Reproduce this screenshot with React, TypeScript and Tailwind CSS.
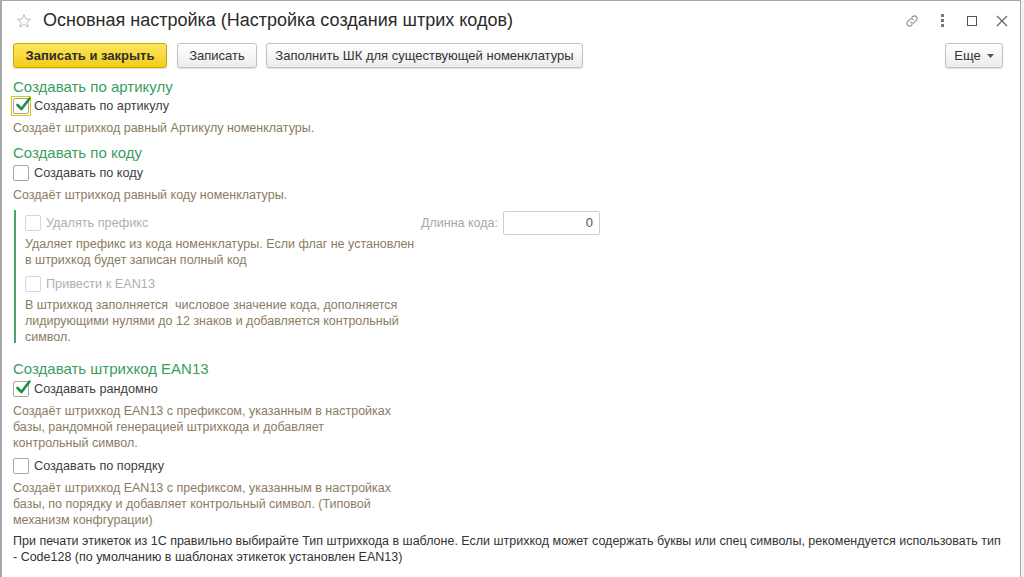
import React from "react";

const font = { fontFamily: '"Liberation Sans", Arial, sans-serif' };

function Check({ checked = false, disabled = false, focused = false }: { checked?: boolean; disabled?: boolean; focused?: boolean }) {
  const box = (
    <div
      className={`relative w-[16px] h-[16px] rounded-[2px] border bg-white ${disabled ? "border-[#d6d6d6]" : "border-[#a6a6a6]"}`}
    >
      {checked && (
        <svg className="absolute left-[1px] top-[-3px]" width="17" height="17" viewBox="0 0 17 17">
          <path d="M2.5 9 L6.5 13 L14.5 2.5" fill="none" stroke="#1f8f3f" strokeWidth="2.6" strokeLinecap="round" strokeLinejoin="round" />
        </svg>
      )}
    </div>
  );
  if (focused) {
    return <div className="w-[20px] h-[20px] -ml-[2px] border border-[#e6c800] flex items-center justify-center shrink-0">{box}</div>;
  }
  return <div className="shrink-0">{box}</div>;
}

function Header({ children, className = "" }: { children: React.ReactNode; className?: string }) {
  return <div className={`shrink-0 h-[18px] leading-[18px] text-[15px] text-[#3a9e5f] ${className}`}>{children}</div>;
}

function Desc({ children, className = "" }: { children: React.ReactNode; className?: string }) {
  return <div className={`shrink-0 whitespace-nowrap text-[12.5px] leading-[16px] text-[#8a7c62] ${className}`}>{children}</div>;
}

function CheckRow({ label, checked, disabled, focused, className = "" }: { label: string; checked?: boolean; disabled?: boolean; focused?: boolean; className?: string }) {
  return (
    <div className={`shrink-0 h-[18px] flex items-center gap-[5px] ${className}`}>
      <Check checked={checked} disabled={disabled} focused={focused} />
      <span className={`text-[12.7px] leading-[16px] ${disabled ? "text-[#b0b0b0]" : "text-[#404040]"} ${focused ? "-ml-[2px]" : ""}`}>{label}</span>
    </div>
  );
}

export default function App() {
  return (
    <div className="w-[1024px] h-[577px] flex bg-[#f2f2f2] overflow-hidden" style={font}>
      <div className="w-[1021px] h-[577px] shrink-0 bg-white border-l-2 border-t border-r border-[#a8a8a8] flex flex-col overflow-hidden">
        {/* Title bar */}
        <div className="shrink-0 h-[39px] flex items-center pl-[14px] pr-[10px]">
          <svg width="16" height="16" viewBox="0 0 24 24" className="shrink-0">
            <path d="M12 2.5 L14.8 9 L21.8 9.5 L16.4 14 L18.1 21 L12 17.2 L5.9 21 L7.6 14 L2.2 9.5 L9.2 9 Z" fill="none" stroke="#b5b5b5" strokeWidth="1.4" strokeLinejoin="round" />
          </svg>
          <div className="ml-[11px] text-[18px] text-[#2b2b2b] leading-[22px] mt-[-1px]">
            Основная настройка (Настройка создания штрих кодов)
          </div>
          <div className="ml-auto flex items-center">
            <svg width="16" height="16" viewBox="0 0 24 24" className="mr-[14px]">
              <path d="M10 14a4 4 0 0 0 5.6 0l3.2-3.2a4 4 0 0 0-5.6-5.6l-1.4 1.4" fill="none" stroke="#8a8a8a" strokeWidth="1.6" strokeLinecap="round" />
              <path d="M14 10a4 4 0 0 0-5.6 0l-3.2 3.2a4 4 0 0 0 5.6 5.6l1.4-1.4" fill="none" stroke="#8a8a8a" strokeWidth="1.6" strokeLinecap="round" />
            </svg>
            <div className="w-[16px] h-[16px] flex flex-col items-center justify-center gap-[2px] mr-[14px]">
              <div className="w-[3px] h-[3px] bg-[#777]" />
              <div className="w-[3px] h-[3px] bg-[#777]" />
              <div className="w-[3px] h-[3px] bg-[#777]" />
            </div>
            <div className="w-[16px] h-[16px] flex items-center justify-center mr-[14px]">
              <div className="w-[10px] h-[10px] border-[1.5px] border-[#555]" />
            </div>
            <svg width="16" height="16" viewBox="0 0 16 16">
              <path d="M3 3 L13 13 M13 3 L3 13" stroke="#666" strokeWidth="1.3" />
            </svg>
          </div>
        </div>

        <div className="pl-[11px] pr-[17px] flex flex-col">
          {/* Buttons */}
          <div className="shrink-0 mt-[3px] h-[25px] flex items-stretch">
            <button className="w-[154px] rounded-[3px] border border-[#c9a900] bg-gradient-to-b from-[#fde65a] to-[#f2cc10] text-[13px] font-bold text-[#2d2d2d] shadow-[0_1px_1px_rgba(0,0,0,0.15)]">
              Записать и закрыть
            </button>
            <button className="ml-[10px] w-[80px] rounded-[3px] border border-[#c0c0c0] bg-gradient-to-b from-white to-[#ececec] text-[13px] text-[#333] shadow-[0_1px_1px_rgba(0,0,0,0.12)]">
              Записать
            </button>
            <button className="ml-[9px] w-[317px] rounded-[3px] border border-[#c0c0c0] bg-gradient-to-b from-white to-[#ececec] text-[13px] text-[#333] shadow-[0_1px_1px_rgba(0,0,0,0.12)]">
              Заполнить ШК для существующей номенклатуры
            </button>
            <button className="ml-auto w-[58px] rounded-[3px] border border-[#c0c0c0] bg-gradient-to-b from-white to-[#ececec] text-[13px] text-[#333] flex items-center justify-center gap-[6px] shadow-[0_1px_1px_rgba(0,0,0,0.12)]">
              Еще
              <svg width="7" height="4" viewBox="0 0 7 4"><path d="M0 0 L7 0 L3.5 4 Z" fill="#555" /></svg>
            </button>
          </div>

          {/* Section 1 */}
          <Header className="mt-[10px]">Создавать по артикулу</Header>
          <CheckRow className="mt-[1px]" label="Создавать по артикулу" checked focused />
          <Desc className="mt-[5px]">Создаёт штрихкод равный Артикулу номенклатуры.</Desc>

          {/* Section 2 */}
          <Header className="mt-[8px]">Создавать по коду</Header>
          <CheckRow className="mt-[2px]" label="Создавать по коду" />
          <Desc className="mt-[5px]">Создаёт штрихкод равный коду номенклатуры.</Desc>

          <div className="shrink-0 mt-[7px] ml-[1px] border-l-2 border-[#4aa56c] h-[133px] pl-[9px] flex flex-col">
            <div className="shrink-0 mt-[1px] h-[24px] flex items-center">
              <div className="w-[396px]">
                <CheckRow label="Удалять префикс" disabled />
              </div>
              <span className="text-[12.5px] text-[#a8a8a8]">Длинна кода:</span>
              <div className="ml-[5px] w-[97px] h-[24px] border border-[#cfcfcf] rounded-[2px] bg-white text-right pr-[6px] text-[13px] leading-[22px] text-[#555]">0</div>
            </div>
            <Desc className="mt-[1px] text-[#7f7360]">
              Удаляет префикс из кода номенклатуры. Если флаг не установлен
              <br />в штрихкод будет записан полный код
            </Desc>
            <CheckRow className="mt-[7px]" label="Привести к EAN13" disabled />
            <Desc className="mt-[4px] text-[#7f7360]">
              В штрихкод заполняется&nbsp; числовое значение кода, дополняется
              <br />лидирующими нулями до 12 знаков и добавляется контрольный
              <br />символ.
            </Desc>
          </div>

          {/* Section 3 */}
          <Header className="mt-[17px]">Создавать штрихкод EAN13</Header>
          <CheckRow className="mt-[2px]" label="Создавать рандомно" checked />
          <Desc className="mt-[5px]">
            Создаёт штрихкод EAN13 с префиксом, указанным в настройках
            <br />базы, рандомной генерацией штрихкода и добавляет
            <br />контрольный символ.
          </Desc>
          <CheckRow className="mt-[6px]" label="Создавать по порядку" />
          <Desc className="mt-[5px]">
            Создаёт штрихкод EAN13 с префиксом, указанным в настройках
            <br />базы, по порядку и добавляет контрольный символ. (Типовой
            <br />механизм конфгурации)
          </Desc>

          <div className="shrink-0 mt-[5px] whitespace-nowrap text-[12.5px] leading-[16px] text-[#333]">
            При печати этикеток из 1С правильно выбирайте Тип штрихкода в шаблоне. Если штрихкод может содержать буквы или спец символы, рекомендуется использовать тип
            <br />- Code128 (по умолчанию в шаблонах этикеток установлен EAN13)
          </div>
        </div>
      </div>
      <div className="flex-1" />
    </div>
  );
}
